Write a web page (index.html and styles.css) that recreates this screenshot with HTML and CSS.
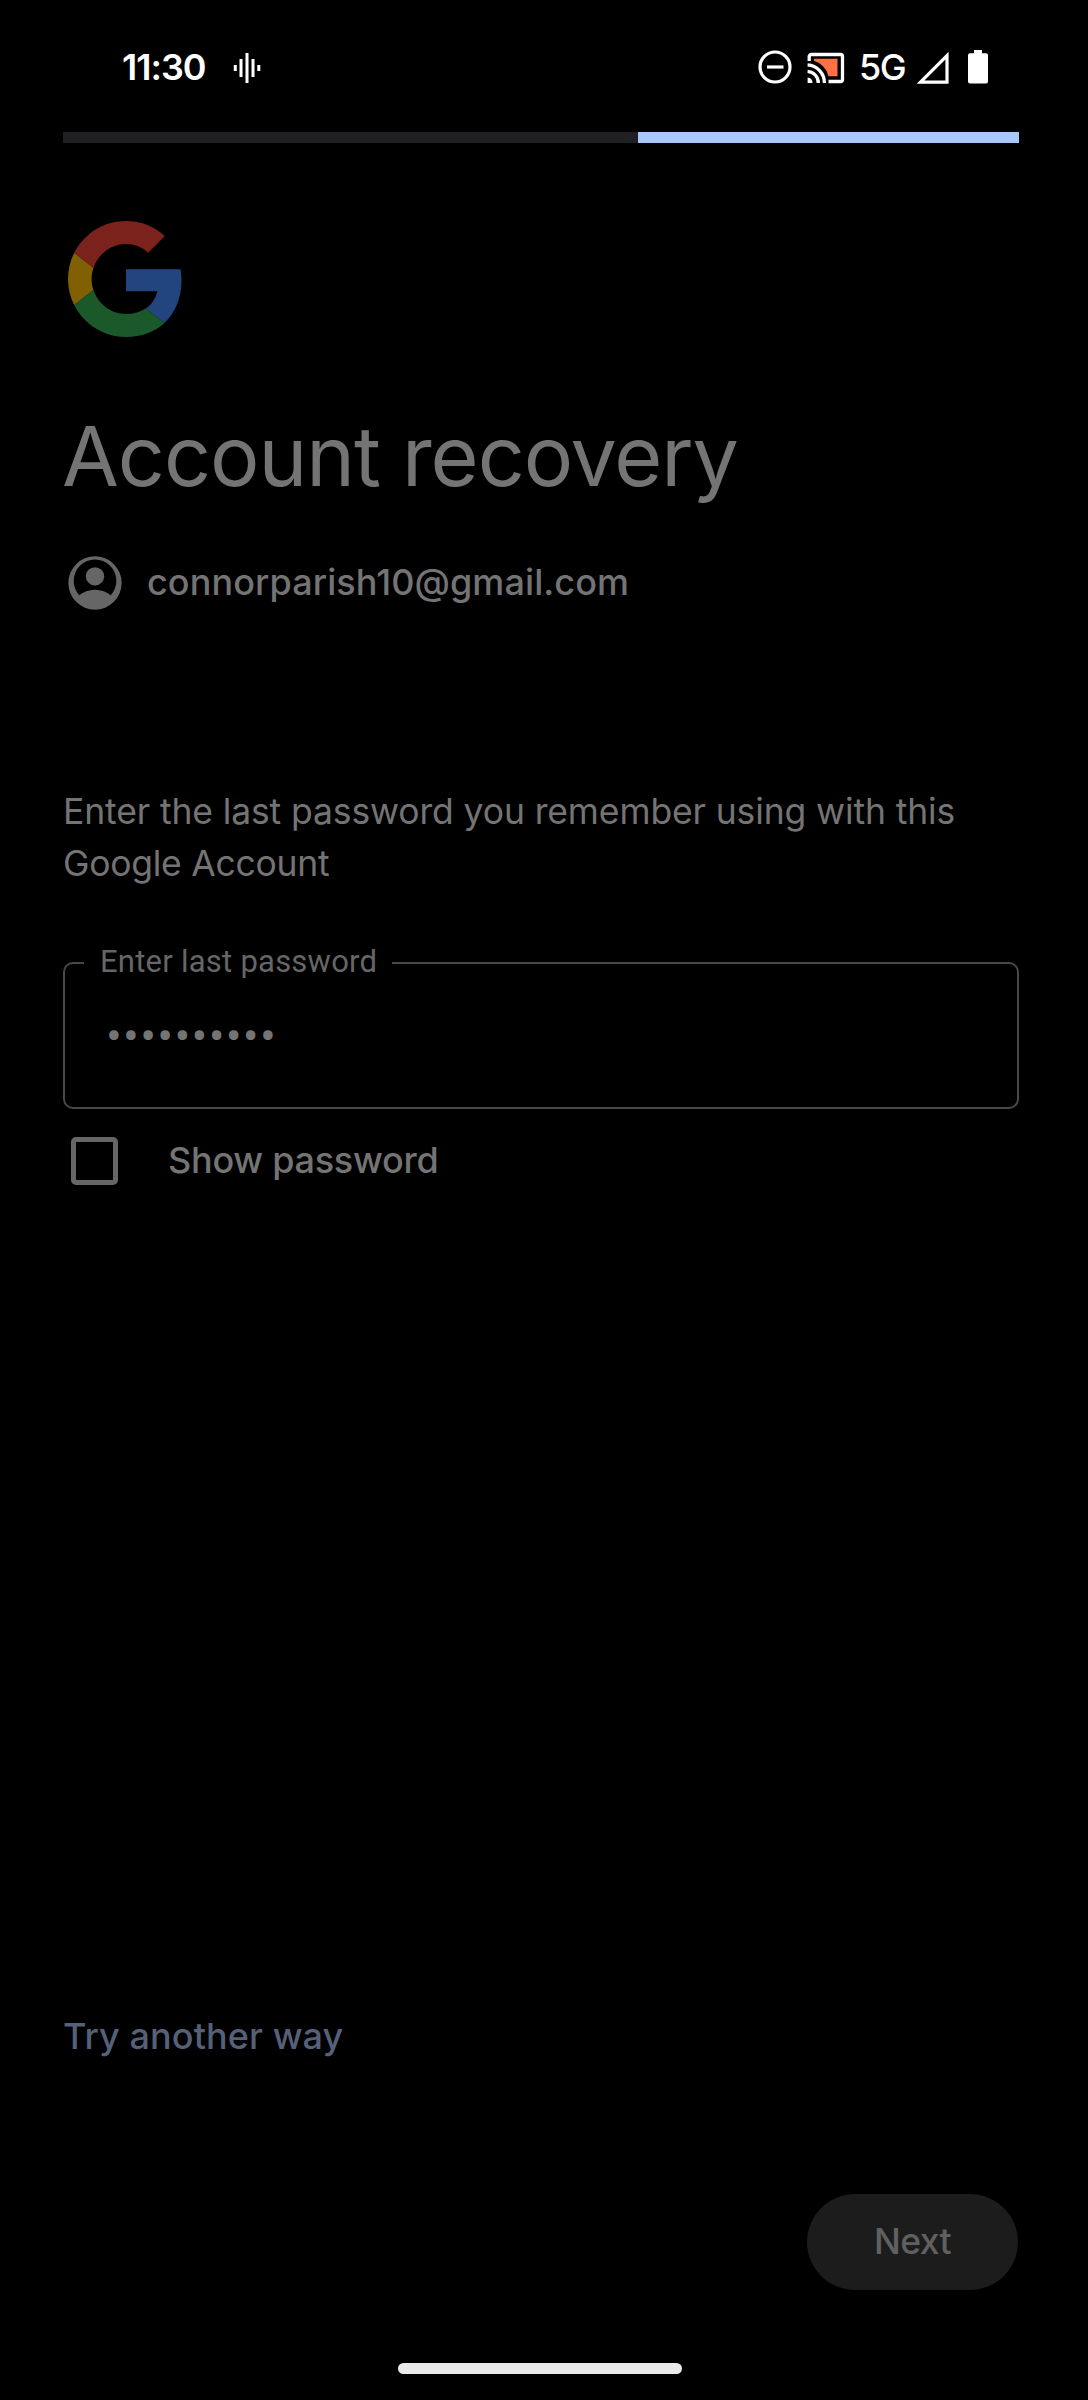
FILE: index.html
```
<!DOCTYPE html>
<html lang="en">
<head>
<meta charset="utf-8">
<title>Account recovery</title>
<link rel="stylesheet" href="styles.css">
</head>
<body>
<div class="screen">
  <header class="status">
    <div class="status-left">
      <span class="clock">11:30</span>
      <svg class="wave" width="28" height="32" viewBox="0 0 28 32" fill="none" stroke="#fff" stroke-width="3"><path d="M2.3 13v6M8 7v18M14 1v30M20 7v18M25.8 13v6"/></svg>
    </div>
    <div class="status-right">
      <svg class="dnd" width="34" height="34" viewBox="0 0 34 34" fill="none" stroke="#fff" stroke-width="3.2"><circle cx="17" cy="17" r="15"/><path d="M9 17h16.5"/></svg>
      <svg class="cast" width="38" height="32" viewBox="0 0 38 32"><path d="M7 6.800H30.500v17.400H21.500A22 22 0 0 0 7 8.800z" fill="#ff7043"/><g fill="none" stroke="#fff" stroke-width="3.300"><path d="M2.200 9V4.500a2 2 0 0 1 2-2H33.500a2 2 0 0 1 2 2V27.500a2 2 0 0 1-2 2H21.500"/><path d="M.6 12.800A18 18 0 0 1 17.400 31M.6 19.300A11.500 11.500 0 0 1 11.300 31"/></g><path d="M.6 25.500A5.500 5.500 0 0 1 5.500 31H.6z" fill="#fff"/></svg>
      <span class="network">5G</span>
      <svg class="signal" width="33" height="33" viewBox="0 0 33 33"><path d="M4.500 31.200L31 4.700V31.200z" fill="none" stroke="#fff" stroke-width="3.200"/></svg>
      <svg class="battery" width="20" height="34" viewBox="0 0 20 34" fill="#fff"><path d="M6 0h8v3.200h4a2 2 0 0 1 2 2V31.500a2 2 0 0 1-2 2H2a2 2 0 0 1-2-2V5.200a2 2 0 0 1 2-2h4z"/></svg>
    </div>
  </header>

  <div class="progress"><div class="progress-active"></div></div>

  <main class="content">
    <svg class="logo" width="116" height="116" viewBox="0 0 48 48">
      <path fill="#7a221b" d="M24 9.500c3.540 0 6.710 1.220 9.210 3.600l6.850-6.850C35.900 2.380 30.470 0 24 0 14.620 0 6.510 5.380 2.560 13.220l7.980 6.190C12.430 13.720 17.740 9.500 24 9.500z"/>
      <path fill="#22457f" d="M46.980 24.550c0-1.570-.15-3.090-.38-4.550H24v9.020h12.940c-.58 2.960-2.260 5.480-4.780 7.180l7.730 6c4.510-4.180 7.090-10.360 7.090-17.650z"/>
      <path fill="#806003" d="M10.530 28.590c-.48-1.450-.76-2.990-.76-4.590s.27-3.140.76-4.590l-7.980-6.190C.92 16.460 0 20.120 0 24c0 3.880.92 7.540 2.560 10.780l7.970-6.190z"/>
      <path fill="#1b592b" d="M24 48c6.480 0 11.930-2.130 15.890-5.810l-7.730-6c-2.150 1.450-4.920 2.300-8.160 2.300-6.260 0-11.570-4.220-13.470-9.910l-7.980 6.190C6.510 42.620 14.620 48 24 48z"/>
    </svg>
    <h1 class="title">Account recovery</h1>
    <div class="account">
      <svg width="64" height="64" viewBox="0 0 24 24" fill="#666"><path fill-rule="evenodd" d="M12 2a10 10 0 1 0 0 20 10 10 0 0 0 0-20zM6.100 16.600a8 8 0 1 1 11.800 0C16.400 15.300 14.300 14.500 12 14.500s-4.400.8-5.900 2.100z"/><circle cx="12" cy="9.500" r="3.450"/></svg>
      <span class="email">connorparish10@gmail.com</span>
    </div>
    <p class="prompt">Enter the last password you remember using with this<br><span class="prompt-end">Google Account</span></p>
    <fieldset class="field">
      <legend class="field-label">Enter last password</legend>
      <div class="field-value">••••••••••</div>
    </fieldset>
    <label class="show"><span class="box"></span><span class="show-text">Show password</span></label>
    <a class="alternate">Try another way</a>
    <button class="next" type="button"><span>Next</span></button>
  </main>
  <div class="home"></div>
</div>
</body>
</html>
```
FILE: styles.css
```
* { box-sizing: border-box; }

body {
  margin: 0;
  background: #000;
  color: #747474;
  font-family: Inter, "Liberation Sans", sans-serif;
}

svg { display: block; flex: none; }

.screen {
  display: flex;
  flex-direction: column;
  width: 1088px;
  height: 2400px;
  overflow: hidden;
}

.status {
  display: flex;
  justify-content: space-between;
  height: 132px;
  padding: 2px 100px 0 122px;
  color: #fff;
  font-size: 36px;
  line-height: 130px;
}

.status-left,
.status-right { display: flex; align-items: center; }

.clock { width: 111px; font-weight: 600; letter-spacing: -1px; white-space: nowrap; }
.wave { margin-top: 2px; }
.cast { margin: 2px 0 0 15px; }
.network { width: 48px; margin-left: 14px; font-weight: 500; letter-spacing: -1.6px; white-space: nowrap; }
.signal { margin-left: 9px; }
.battery { margin-left: 19px; }

.progress {
  display: flex;
  justify-content: flex-end;
  flex: none;
  height: 11px;
  margin: 0 69px 0 63px;
  background: #202022;
}

.progress-active { width: 381px; background: #a8c7fa; }

.content {
  display: flex;
  flex-direction: column;
  align-items: flex-start;
  padding: 0 69px 0 63px;
}

.logo { margin: 78px 0 0 5px; }

.title {
  margin: 69px 0 0 -1px;
  font-size: 82.5px;
  font-weight: 400;
  line-height: 100px;
  letter-spacing: -1.05px;
  white-space: nowrap;
}

.account {
  display: flex;
  align-items: center;
  gap: 20px;
  height: 64px;
  margin-top: 45px;
  font-size: 36px;
  font-weight: 500;
}

.email { padding-bottom: 3px; letter-spacing: 0.09px; }

.prompt {
  margin: 171px 0 0;
  font-size: 35.5px;
  line-height: 52px;
  letter-spacing: -0.12px;
  white-space: nowrap;
}

.prompt-end { letter-spacing: -0.27px; }

.field {
  width: 956px;
  height: 166px;
  margin: 53px 0 0;
  padding: 0 19px;
  border: 2px solid #484848;
  border-radius: 10px;
}

.field-label {
  width: 308px;
  height: 40px;
  padding: 0 16px;
  color: #666;
  font-family: Roboto, sans-serif;
  font-size: 31px;
  line-height: 37px;
  letter-spacing: 0.24px;
  white-space: nowrap;
}

.field-value {
  padding: 29px 0 0 22px;
  font-family: Roboto, sans-serif;
  font-size: 47px;
  line-height: 48px;
  letter-spacing: 1.25px;
}

.show {
  display: flex;
  align-items: center;
  gap: 50px;
  height: 48px;
  margin: 28px 0 0 8px;
  font-size: 36px;
  font-weight: 500;
}

.box { width: 47px; height: 48px; border: 5px solid #666; border-radius: 5px; }
.show-text { padding-bottom: 3px; letter-spacing: -0.26px; }

.alternate {
  margin-top: 826px;
  color: #566179;
  font-size: 36px;
  font-weight: 500;
  line-height: 50px;
  letter-spacing: 0.08px;
}

.next {
  display: flex;
  align-items: center;
  justify-content: center;
  align-self: flex-end;
  width: 211px;
  height: 96px;
  margin: 133px 1px 0 0;
  padding: 0 0 1px;
  border: 0;
  border-radius: 48px;
  background: #1c1c1c;
  color: #606060;
  font: 500 35.5px Inter, sans-serif;
  letter-spacing: -0.6px;
}

.home {
  width: 284px;
  height: 11px;
  margin: 73px 0 0 398px;
  border-radius: 6px;
  background: #ebebeb;
}
```
